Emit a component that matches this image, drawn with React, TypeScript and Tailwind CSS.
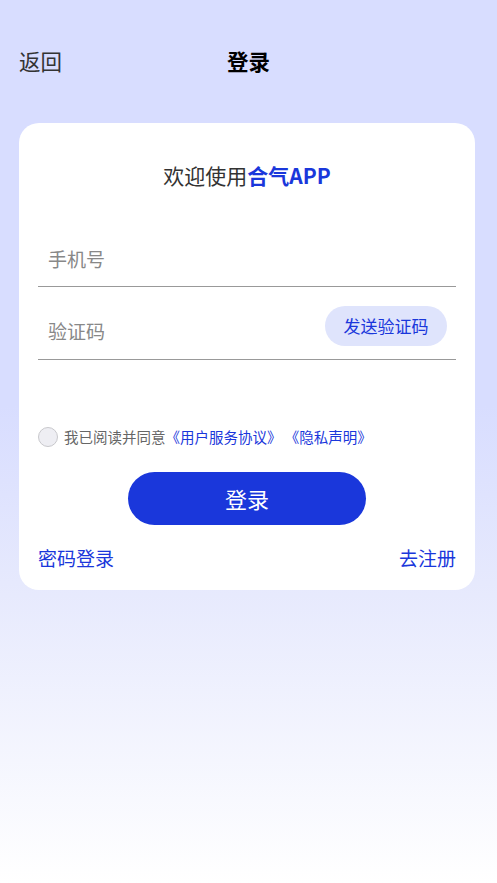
import React from "react";

const font = { fontFamily: '"Noto Sans CJK SC", "Noto Sans", sans-serif' };

const App = () => {
  return (
    <div
      className="min-h-[883px] w-full bg-[linear-gradient(180deg,#d8ddff_0%,#d8ddff_46%,#e6e9fd_66%,#ffffff_100%)] pt-[39px]"
      style={font}
    >
      {/* header */}
      <div className="relative flex h-[44px] items-center px-[19px]">
        <span className="text-[21.5px] leading-none text-[#333]">返回</span>
        <div className="absolute inset-0 flex items-center justify-center">
          <span className="text-[21.5px] font-bold leading-none text-black">登录</span>
        </div>
      </div>

      {/* card */}
      <div className="ml-[19px] mt-[40px] w-[456px] rounded-[20px] bg-white px-[19px] pb-[18px] pt-[38px]">
        <div className="text-center text-[21px] leading-[28px] text-[#333]">
          欢迎使用<span className="font-bold text-[#1a37db]">合气APP</span>
        </div>

        <div className="mt-[26px] flex h-[72px] items-end border-b-[1.5px] border-[#999] pb-[13px] pl-[10px]">
          <span className="text-[19px] leading-[28px] text-[#888]">手机号</span>
        </div>

        <div className="flex h-[73px] items-end justify-between border-b-[1.5px] border-[#999] pl-[10px] pr-[9px]">
          <span className="mb-[14px] text-[19px] leading-[28px] text-[#888]">验证码</span>
          <button className="mb-[13px] flex h-[40px] w-[122px] items-center justify-center rounded-full bg-[#dfe4fc] text-[17px] text-[#1a37db]">
            发送验证码
          </button>
        </div>

        <div className="mt-[66px] flex items-center">
          <span className="h-[20px] w-[20px] rounded-full border-[1.5px] border-[#c8c8cc] bg-[#eeeef3]" />
          <span className="ml-[6px] text-[14.5px] text-[#666]">我已阅读并同意</span>
          <span className="text-[14.5px] text-[#1a37db]">《用户服务协议》 《隐私声明》</span>
        </div>

        <div className="mt-[24px] flex justify-center">
          <button className="h-[53px] w-[238px] rounded-full bg-[#1a37db] text-[22px] text-white">
            登录
          </button>
        </div>

        <div className="mt-[19px] flex items-center justify-between">
          <span className="text-[19px] text-[#1a37db]">密码登录</span>
          <span className="text-[19px] text-[#1a37db]">去注册</span>
        </div>
      </div>
    </div>
  );
};

export default App;
